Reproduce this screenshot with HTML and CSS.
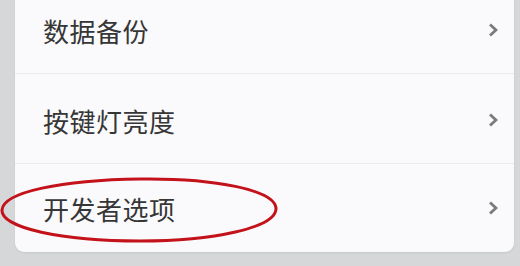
FILE: index.html
```html
<!DOCTYPE html>
<html lang="zh-CN">
<head>
  <meta name="viewport" content="width=device-width, initial-scale=1">
  <link rel="stylesheet" href="styles.css">
</head>
<body>
  <div class="screen">
    <ul class="settings-list">
      <li class="settings-item">
        <span class="label">数据备份</span>
        <svg class="chevron" viewBox="0 0 10 14"><path d="M2 1.5 L8 7 L2 12.5"/></svg>
      </li>
      <li class="settings-item">
        <span class="label">按键灯亮度</span>
        <svg class="chevron" viewBox="0 0 10 14"><path d="M2 1.5 L8 7 L2 12.5"/></svg>
      </li>
      <li class="settings-item">
        <span class="label">开发者选项</span>
        <svg class="chevron" viewBox="0 0 10 14"><path d="M2 1.5 L8 7 L2 12.5"/></svg>
      </li>
    </ul>

    <!-- hand-drawn annotation round the last item -->
    <svg class="mark" width="520" height="266" viewBox="0 0 520 266">
      <path d="M276 208 C274 190 215 178 140 179 C62 180 3 192 2 210 C1 228 62 241 140 241 C212 241 277 228 276 208 Z"/>
    </svg>
  </div>
</body>
</html>
```

FILE: styles.css
```css
:root {
  --page-bg: #d6d7d9;
  --card-bg: #fafafc;
  --divider: #ebebed;
  --text-color: #363636;
  --chevron-color: #7a7a7a;
  --mark-color: #c4121b;
}

* {
  box-sizing: border-box;
}

body {
  margin: 0;
  background-color: var(--page-bg);
  font-family: "Noto Sans CJK SC", "Noto Sans", sans-serif;
  overflow: hidden;
}

.screen {
  display: flow-root;
  position: relative;
  width: 520px;
  height: 266px;
  padding: 0 6px 0 15px;
}

.settings-list {
  list-style: none;
  margin: -16px 0 0;
  padding: 0;
  background-color: var(--card-bg);
  border-radius: 0 0 9px 9px;
  box-shadow: 0 1px 2px rgba(0, 0, 0, 0.08);
}

.settings-item {
  display: flex;
  align-items: center;
  justify-content: space-between;
  height: 90px;
  padding: 3px 16px 0 28px;
  border-bottom: 1px solid var(--divider);
}

.settings-item:last-child {
  height: 88px;
  padding-top: 0;
  border-bottom: none;
}

.label {
  font-size: 26px;
  color: var(--text-color);
  letter-spacing: 0.5px;
}

.chevron {
  width: 10px;
  height: 14px;
  fill: none;
  stroke: var(--chevron-color);
  stroke-width: 2.8;
}

.mark {
  position: absolute;
  top: 0;
  left: 0;
  pointer-events: none;
}

.mark path {
  fill: none;
  stroke: var(--mark-color);
  stroke-width: 3;
}
```
